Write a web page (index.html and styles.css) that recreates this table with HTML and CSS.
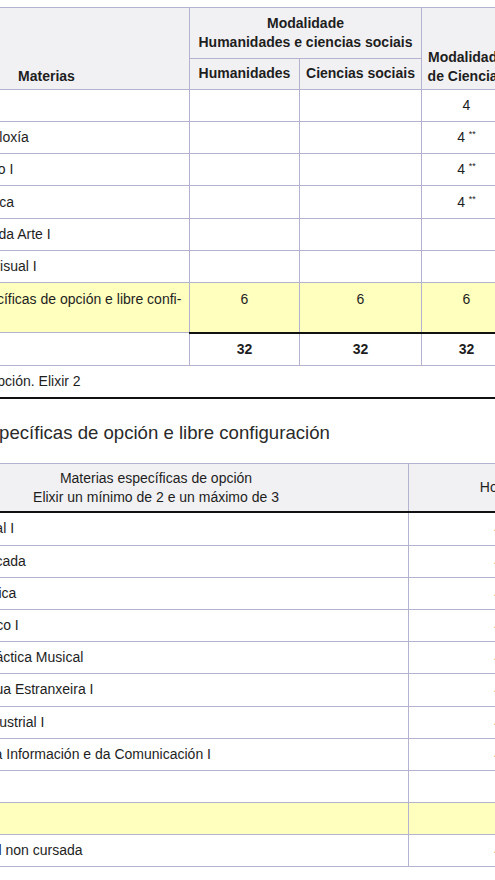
FILE: index.html
```html
<!DOCTYPE html>
<html lang="gl">
<head>
<meta charset="utf-8">
<title>Bacharelato – Materias</title>
<link rel="stylesheet" href="styles.css">
</head>
<body>
<div class="page">
  <div class="inner">
    <table class="grid t1">
      <colgroup>
        <col class="c-mat">
        <col class="c-hum">
        <col class="c-soc">
        <col class="c-cie">
      </colgroup>
      <thead>
        <tr class="h1">
          <th rowspan="2" class="bottom">Materias</th>
          <th colspan="2">Modalidade<br>Humanidades e ciencias sociais</th>
          <th rowspan="2" class="bottom">Modalidade<br>de Ciencias</th>
        </tr>
        <tr class="h2">
          <th>Humanidades</th>
          <th>Ciencias sociais</th>
        </tr>
      </thead>
      <tbody>
        <tr><td>Matemáticas I</td><td></td><td></td><td class="num">4</td></tr>
        <tr><td>Bioloxía e Xeoloxía</td><td></td><td></td><td class="num">4 <sup>**</sup></td></tr>
        <tr><td>Debuxo técnico I</td><td></td><td></td><td class="num">4 <sup>**</sup></td></tr>
        <tr><td>Física e Química</td><td></td><td></td><td class="num">4 <sup>**</sup></td></tr>
        <tr><td>Fundamentos da Arte I</td><td></td><td></td><td></td></tr>
        <tr><td>Cultura Audiovisual I</td><td></td><td></td><td></td></tr>
        <tr class="hl two"><td>Materias específicas de opción e libre confi-<br>guración</td><td class="num">6</td><td class="num">6</td><td class="num">6</td></tr>
        <tr class="total"><td>Total horas</td><td class="num b">32</td><td class="num b">32</td><td class="num b">32</td></tr>
        <tr class="note"><td colspan="4">** Troncal de opción. Elixir 2</td></tr>
      </tbody>
    </table>

    <h2 class="section">Materias específicas de opción e libre configuración</h2>

    <table class="grid t2">
      <colgroup>
        <col class="c-esp">
        <col class="c-hor">
      </colgroup>
      <thead>
        <tr class="h3">
          <th>Materias específicas de opción<br>Elixir un mínimo de 2 e un máximo de 3</th>
          <th>Horas</th>
        </tr>
      </thead>
      <tbody>
        <tr><td>Análise Musical I</td><td class="num">4</td></tr>
        <tr><td>Anatomía Aplicada</td><td class="num">4</td></tr>
        <tr><td>Cultura Científica</td><td class="num">4</td></tr>
        <tr><td>Debuxo Artístico I</td><td class="num">4</td></tr>
        <tr><td>Linguaxe e Práctica Musical</td><td class="num">4</td></tr>
        <tr><td>Segunda Lingua Estranxeira I</td><td class="num">4</td></tr>
        <tr><td>Tecnoloxía Industrial I</td><td class="num">4</td></tr>
        <tr><td>Tecnoloxías da Información e da Comunicación I</td><td class="num">4</td></tr>
        <tr><td>Relixión</td><td class="num">1</td></tr>
        <tr class="hl"><td>Total</td><td class="num"></td></tr>
        <tr><td>Materia troncal non cursada</td><td class="num">4</td></tr>
      </tbody>
    </table>
  </div>
</div>
</body>
</html>
```
FILE: styles.css
```css
html, body {
  margin: 0;
  padding: 0;
  background: #ffffff;
}

body {
  font-family: "Liberation Sans", Arial, sans-serif;
  font-size: 14px;
  line-height: 19px;
  color: #1e1e1e;
}

.page {
  width: 495px;
  height: 880px;
  overflow: hidden;
}

.inner {
  margin-left: -97px;
  width: 720px;
  padding-top: 7px;
}

.grid {
  border-collapse: collapse;
  table-layout: fixed;
}

.grid th,
.grid td {
  border: 1px solid #b3b3cf;
  padding: 0 5px;
}

.grid th {
  background: #f1f1f3;
  font-weight: bold;
  text-align: center;
  vertical-align: middle;
}

.grid th.bottom {
  vertical-align: bottom;
  padding-bottom: 3px;
}

.grid td {
  height: 31.2px;
  vertical-align: middle;
  text-align: left;
  white-space: nowrap;
}

.grid td.num {
  text-align: center;
}

.grid td.b {
  font-weight: bold;
}

.grid sup {
  font-size: 9px;
  line-height: 0;
  vertical-align: 5px;
}

/* table 1 */
.t1 {
  width: 608px;
}

.c-mat { width: 286px; }
.c-hum { width: 110px; }
.c-soc { width: 122px; }
.c-cie { width: 90px; }

.t1 .h1 th { height: 50px; }
.t1 .h2 th { height: 29.5px; }

.t1 tbody td {
  height: 31.3px;
}

.t1 .two td {
  height: 41.5px;
  vertical-align: top;
  padding-top: 7px;
  padding-bottom: 0;
}

.hl td {
  background: #ffffbe;
}

.t1 .total td + td {
  border-top: 2px solid #111111;
}

.t1 .note td {
  border-left: none;
  border-right: none;
  border-bottom: 2px solid #111111;
  padding-left: 2px;
}

/* heading */
.section {
  margin: 23px 0 19px;
  font-size: 18.6px;
  line-height: 22px;
  font-weight: normal;
  color: #2a2a2a;
}

/* table 2 */
.t2 {
  width: 685px;
}

.c-esp { width: 505px; }
.c-hor { width: 180px; }

.t2 .h3 th {
  height: 47px;
  font-weight: normal;
  border-bottom: 2px solid #111111;
}
```
